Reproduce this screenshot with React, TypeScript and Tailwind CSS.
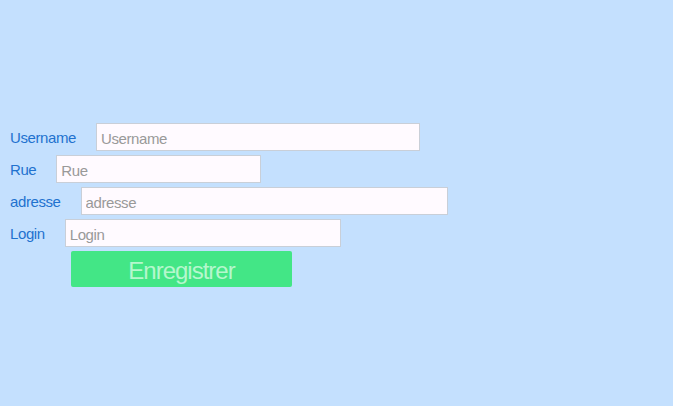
import React from "react";

const fields = [
  { label: "Username", width: "w-[324px]" },
  { label: "Rue", width: "w-[205px]" },
  { label: "adresse", width: "w-[367px]" },
  { label: "Login", width: "w-[276px]" },
];

const App = () => {
  return (
    <div className="min-h-[406px] w-full bg-[#c4e0fe] font-['Liberation_Sans',Arial,sans-serif] pt-[123px] pl-[10px]">
      <form className="flex flex-col gap-1">
        {fields.map((f) => (
          <div key={f.label} className="flex items-center gap-[20px]">
            <label className="text-[15px] tracking-[-0.4px] text-[#1f72cf] pt-[2px]">
              {f.label}
            </label>
            <input
              placeholder={f.label}
              className={`${f.width} h-[28px] border border-[#c9cfd8] bg-[#fffaff] px-1 pt-[2px] text-[15px] tracking-[-0.4px] placeholder:text-[#999] outline-none`}
            />
          </div>
        ))}
        <div className="pl-[61px]">
          <button
            type="button"
            className="w-[221px] h-[36px] rounded-[2px] bg-[#43e686] text-[24px] tracking-[-1px] text-[#b5f7cd] pt-[2px]"
          >
            Enregistrer
          </button>
        </div>
      </form>
    </div>
  );
};

export default App;
